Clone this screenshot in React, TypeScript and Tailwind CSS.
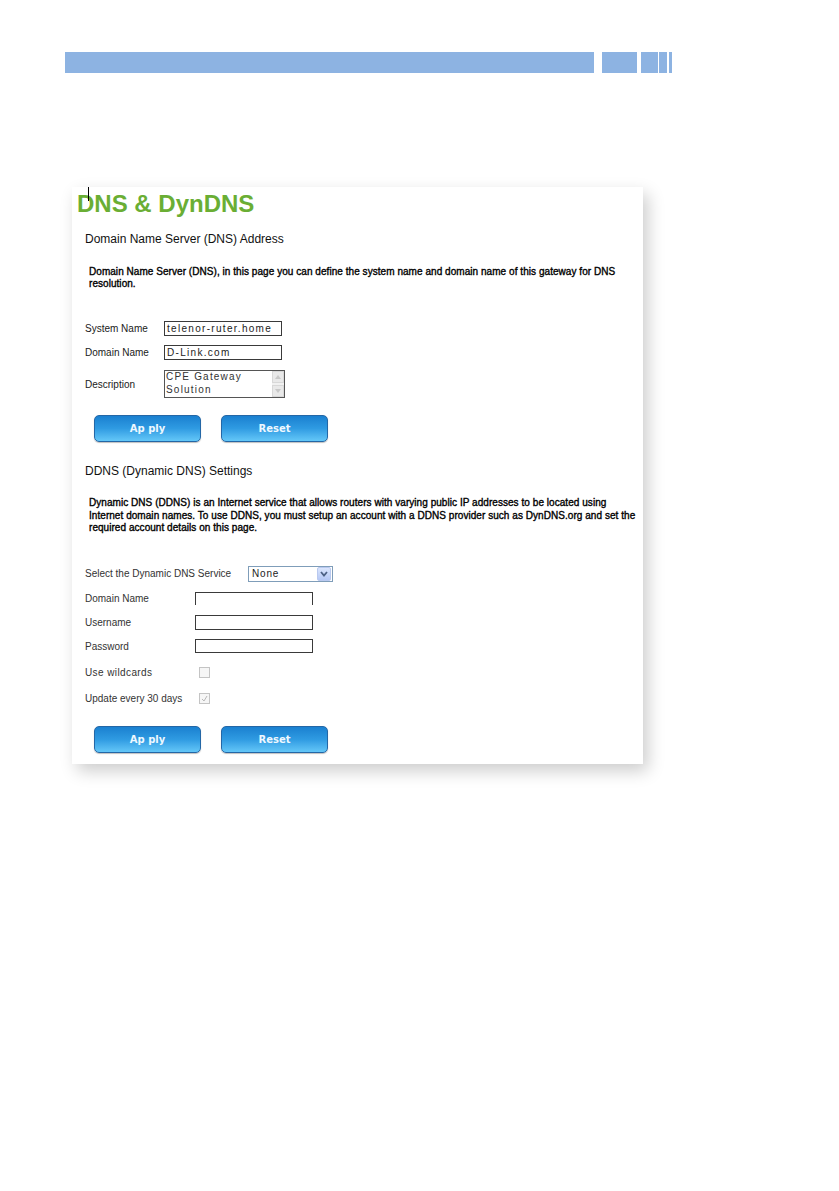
import React from "react";

const sans = { fontFamily: '"Liberation Sans", Arial, sans-serif' };

function Btn({ label }: { label: string }) {
  return (
    <div
      className="w-[107px] h-[27px] rounded-[5px] border border-[#2467a6] bg-gradient-to-b from-[#1a80d0] via-[#2f9be2] to-[#63c7f8] shadow-[0_1px_1px_rgba(0,0,0,0.25)] flex items-center justify-center text-[10px] font-bold text-[#eef8ff]"
      style={{ fontFamily: '"DejaVu Sans", Verdana, sans-serif' }}
    >
      {label}
    </div>
  );
}

function TextBox({ value, w, h, noBottom }: { value?: string; w: number; h: number; noBottom?: boolean }) {
  return (
    <div
      className={`border border-[#3a3a3a] bg-white flex items-center pl-[2px] text-[10px] tracking-[1.3px] text-[#222] ${noBottom ? "border-b-0" : ""}`}
      style={{ width: w, height: h }}
    >
      {value}
    </div>
  );
}

function Check({ checked }: { checked?: boolean }) {
  return (
    <div className="w-[11px] h-[11px] border border-[#c4c4c4] bg-[#f6f6f6] flex items-center justify-center">
      {checked && (
        <svg width="7" height="7" viewBox="0 0 7 7">
          <path d="M1 4 L3 6 L6 1" stroke="#b8b8b8" strokeWidth="1" fill="none" />
        </svg>
      )}
    </div>
  );
}

export default function App() {
  return (
    <div className="w-[839px] h-[1191px] bg-white overflow-hidden" style={sans}>
      {/* top bar */}
      <div className="flex pt-[52px] pl-[65px] h-[73px]">
        <div className="w-[529px] h-[21px] bg-[#8db3e2]" />
        <div className="w-[35px] h-[21px] bg-[#8db3e2] ml-[8px]" />
        <div className="w-[17px] h-[21px] bg-[#8db3e2] ml-[4px]" />
        <div className="w-[8px] h-[21px] bg-[#8db3e2] ml-[1px]" />
        <div className="w-[3px] h-[21px] bg-[#8db3e2] ml-[2px]" />
      </div>

      {/* panel */}
      <div className="relative ml-[72px] mt-[114px] w-[571px] h-[577px] bg-white shadow-[5px_7px_16px_rgba(0,0,0,0.2)] flex flex-col">
        <div className="absolute left-[16px] top-0 w-px h-[14px] bg-black" />
        <div className="pt-[5px] pl-[5px] text-[24px] leading-[24px] font-bold text-[#6aae34]">DNS &amp; DynDNS</div>

        <div className="mt-[16px] pl-[13px] text-[12px] leading-[14px] text-[#111]">Domain Name Server (DNS) Address</div>

        <div className="mt-[20px] pl-[17px] text-[10px] leading-[12px] tracking-[0.05px] text-black whitespace-nowrap [-webkit-text-stroke:0.35px_#000]">
          Domain Name Server (DNS), in this page you can define the system name and domain name of this gateway for DNS
          <br />
          resolution.
        </div>

        <div className="mt-[31px] pl-[13px] flex items-center text-[10px] text-[#1a1a1a]">
          <div className="w-[79px]">System Name</div>
          <TextBox value="telenor-ruter.home" w={118} h={15} />
        </div>
        <div className="mt-[9px] pl-[13px] flex items-center text-[10px] text-[#1a1a1a]">
          <div className="w-[79px]">Domain Name</div>
          <TextBox value="D-Link.com" w={118} h={15} />
        </div>
        <div className="mt-[10px] pl-[13px] flex items-center text-[10px] text-[#1a1a1a]">
          <div className="w-[79px]">Description</div>
          <div className="w-[121px] h-[28px] border border-[#555] flex bg-white">
            <div className="flex-1 pl-[1px] text-[10px] leading-[12.5px] tracking-[1.2px] text-[#333]">
              CPE Gateway
              <br />
              Solution
            </div>
            <div className="w-[12px] h-full bg-[#f1f1f1] flex flex-col justify-between">
              <div className="w-[12px] h-[12px] bg-[#e9e9e9] border border-[#d8d8d8] flex items-center justify-center">
                <svg width="6" height="4" viewBox="0 0 6 4"><path d="M0 4 L3 0 L6 4Z" fill="#c8c8c8" /></svg>
              </div>
              <div className="w-[12px] h-[12px] bg-[#e9e9e9] border border-[#d8d8d8] flex items-center justify-center">
                <svg width="6" height="4" viewBox="0 0 6 4"><path d="M0 0 L3 4 L6 0Z" fill="#c8c8c8" /></svg>
              </div>
            </div>
          </div>
        </div>

        <div className="mt-[17px] pl-[22px] flex gap-[20px]">
          <Btn label="Ap ply" />
          <Btn label="Reset" />
        </div>

        <div className="mt-[22px] pl-[13px] text-[12px] leading-[14px] text-[#111]">DDNS (Dynamic DNS) Settings</div>

        <div className="mt-[19px] pl-[17px] text-[10px] leading-[12.5px] tracking-[0.05px] text-black whitespace-nowrap [-webkit-text-stroke:0.35px_#000]">
          Dynamic DNS (DDNS) is an Internet service that allows routers with varying public IP addresses to be located using
          <br />
          Internet domain names. To use DDNS, you must setup an account with a DDNS provider such as DynDNS.org and set the
          <br />
          required account details on this page.
        </div>

        <div className="mt-[31px] pl-[13px] flex items-center text-[10px] text-[#333]">
          <div className="w-[163px]">Select the Dynamic DNS Service</div>
          <div className="w-[85px] h-[16px] border border-[#7f9db9] bg-white flex items-center">
            <div className="flex-1 pl-[3px] text-[10px] tracking-[0.8px] text-[#222]">None</div>
            <div className="w-[14px] h-[14px] mr-px rounded-[2px] border border-[#b9c9ef] bg-gradient-to-b from-[#dbe6fd] to-[#b5c8f5] flex items-center justify-center">
              <svg width="8" height="6" viewBox="0 0 8 6">
                <path d="M1 1 L4 4.5 L7 1" stroke="#4d6185" strokeWidth="1.8" fill="none" />
              </svg>
            </div>
          </div>
        </div>
        <div className="mt-[9px] pl-[13px] flex items-center text-[10px] text-[#333]">
          <div className="w-[110px]">Domain Name</div>
          <TextBox w={118} h={13} noBottom />
        </div>
        <div className="mt-[9px] pl-[13px] flex items-center text-[10px] text-[#333]">
          <div className="w-[110px]">Username</div>
          <TextBox w={118} h={15} />
        </div>
        <div className="mt-[9px] pl-[13px] flex items-center text-[10px] text-[#333]">
          <div className="w-[110px]">Password</div>
          <TextBox w={118} h={14} />
        </div>
        <div className="mt-[13px] pl-[13px] h-[12px] flex items-center text-[10px] text-[#333]">
          <div className="w-[114px] tracking-[0.4px]">Use wildcards</div>
          <Check />
        </div>
        <div className="mt-[14px] pl-[13px] h-[12px] flex items-center text-[10px] text-[#333]">
          <div className="w-[114px]">Update every 30 days</div>
          <Check checked />
        </div>

        <div className="mt-[21px] pl-[22px] flex gap-[20px]">
          <Btn label="Ap ply" />
          <Btn label="Reset" />
        </div>
      </div>
    </div>
  );
}
